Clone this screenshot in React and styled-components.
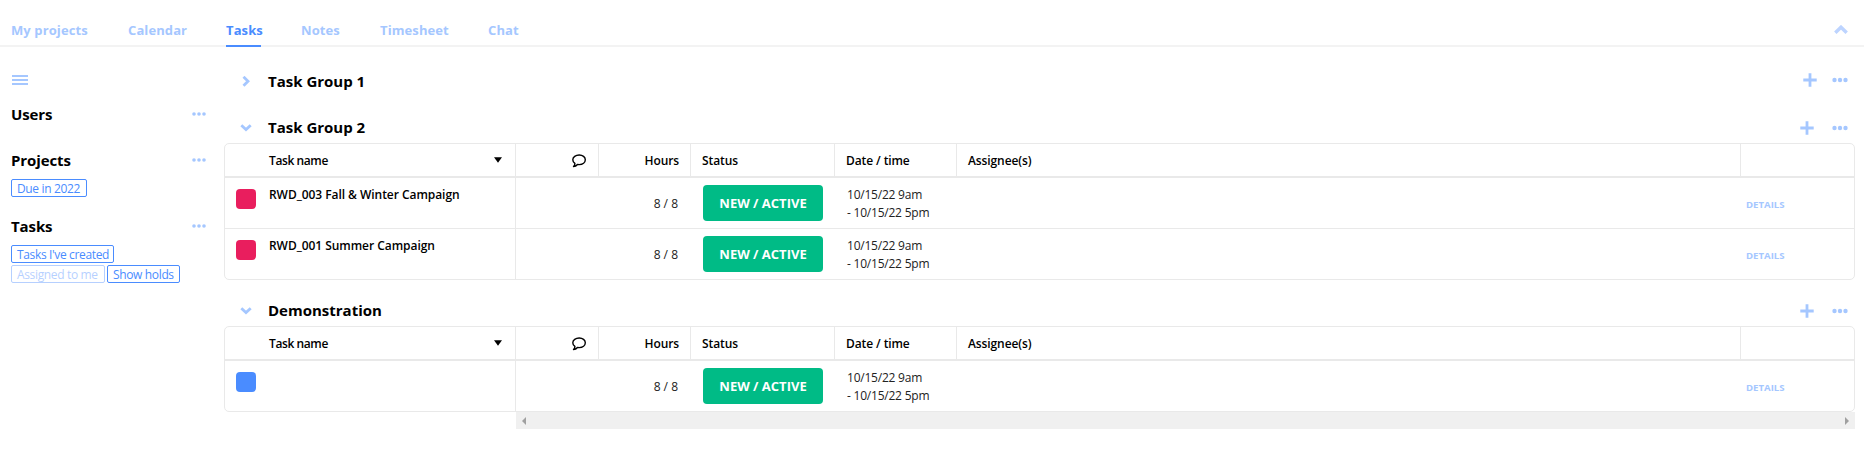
import React from 'react';
import styled, { createGlobalStyle } from 'styled-components';

const blue = '#4a8cff';
const paleBlue = '#a5c7ff';
const line = '#e9e9e9';

const GlobalStyle = createGlobalStyle`
  * { box-sizing: border-box; }
  body {
    margin: 0;
    background: #fff;
    color: #000;
    font-family: 'Open Sans', 'Noto Sans', sans-serif;
    font-size: 12px;
  }
  svg { display: block; flex: none; }
`;

const Page = styled.div`
  min-height: 453px;
`;

const NavBar = styled.nav`
  display: flex;
  align-items: flex-end;
  justify-content: space-between;
  height: 47px;
  padding: 0 16px 0 11px;
  box-shadow: inset 0 -2px #f3f3f3;
`;

const TabList = styled.div`
  display: flex;
  gap: 40px;
`;

const Tab = styled.a`
  width: ${p => p.$width}px;
  padding-bottom: 5px;
  border-bottom: 2px solid ${p => (p.$active ? blue : 'transparent')};
  color: ${p => (p.$active ? blue : paleBlue)};
  font-size: 13px;
  font-weight: 700;
  line-height: 20px;
  letter-spacing: 0.1px;
  white-space: nowrap;
`;

const CollapseButton = styled.div`
  padding-bottom: 13px;
`;

const Body = styled.div`
  display: flex;
`;

const Sidebar = styled.aside`
  flex: none;
  width: 224px;
  padding: 28px 18px 0 11px;
`;

const MenuButton = styled.div`
  display: flex;
  flex-direction: column;
  gap: 2px;
  width: 16px;
  margin-left: 1px;
`;

const MenuLine = styled.span`
  height: 2px;
  background: ${paleBlue};
`;

const FilterSection = styled.section`
  min-height: 27px;
  margin-top: 19px;
`;

const FilterHeader = styled.div`
  display: flex;
  align-items: center;
  justify-content: space-between;
  height: 20px;
`;

const Heading = styled.h2`
  margin: 0;
  font-size: 15px;
  font-weight: 700;
  line-height: 20px;
  letter-spacing: -0.1px;
`;

const GroupTitle = styled(Heading)`
  padding-bottom: 2px;
  letter-spacing: 0;
`;

const ChipList = styled.div`
  display: flex;
  flex-wrap: wrap;
  gap: 2px;
  margin-top: 9px;
`;

const Chip = styled.span`
  width: ${p => p.$width}px;
  height: 18px;
  padding-left: 5px;
  border: 1px solid ${blue};
  border-radius: 2px;
  color: ${blue};
  line-height: 17px;
  letter-spacing: -0.35px;
  white-space: nowrap;
  opacity: ${p => (p.$off ? 0.4 : 1)};
`;

const Main = styled.main`
  display: flex;
  flex-direction: column;
  gap: 16px;
  width: 1631px;
  padding-top: 20px;
`;

const GroupHeader = styled.header`
  display: flex;
  align-items: center;
  height: 30px;
  padding: 0 7px 0 16px;
`;

const Toggle = styled.div`
  display: flex;
  justify-content: center;
  width: 12px;
  margin-right: 16px;
`;

const GroupActions = styled.div`
  display: flex;
  align-items: center;
  gap: ${p => (p.$collapsed ? 15 : 18)}px;
  margin-left: auto;
  padding-bottom: ${p => (p.$collapsed ? 4 : 0)}px;
`;

const Table = styled.div`
  border: 1px solid ${line};
  border-radius: 5px;
`;

const Columns = styled.div`
  display: grid;
  grid-template-columns: 291px 83px 92px 144px 122px 784px 1fr;
`;

const HeaderRow = styled(Columns)`
  height: 34px;
  border-bottom: 2px solid ${line};
`;

const HeaderCell = styled.div`
  display: flex;
  align-items: center;
  justify-content: ${p => p.$justify || 'flex-start'};
  padding: 0 11px;
  border-right: 1px solid ${line};
  font-weight: 600;
  letter-spacing: -0.1px;
  &:last-child { border-right: 0; }
`;

const NameHeaderCell = styled(HeaderCell)`
  justify-content: space-between;
  padding: 0 13px 0 44px;
  letter-spacing: -0.4px;
`;

const IconHeaderCell = styled(HeaderCell)`
  justify-content: flex-end;
  padding: 1px 12px 0 0;
`;

const TaskRow = styled(Columns)`
  height: 50px;
  & + & {
    height: 51px;
    border-top: 1px solid ${line};
  }
`;

const NameCell = styled.div`
  display: flex;
  gap: 13px;
  padding: 8px 0 0 11px;
  border-right: 1px solid ${line};
  font-weight: 600;
  line-height: 18px;
  letter-spacing: -0.05px;
  white-space: nowrap;
`;

const Swatch = styled.span`
  width: 20px;
  height: 20px;
  margin-top: 3px;
  border-radius: 4px;
  background: ${p => p.$color};
`;

const Cell = styled.div`
  display: flex;
  align-items: center;
  justify-content: ${p => p.$justify || 'flex-start'};
  padding: 0 12px;
  color: #222;
  line-height: 18px;
`;

const HoursCell = styled(Cell)`
  justify-content: flex-end;
  padding: 2px 13px 0 0;
`;

const DateCell = styled(Cell)`
  padding-top: 2px;
  letter-spacing: -0.22px;
  white-space: nowrap;
`;

const StatusButton = styled.span`
  width: 120px;
  height: 36px;
  border-radius: 4px;
  background: #00bb86;
  color: #fff;
  font-size: 13px;
  font-weight: 700;
  line-height: 36px;
  text-align: center;
`;

const DetailsLink = styled.a`
  margin-left: -7px;
  padding-top: 4px;
  color: ${paleBlue};
  font-size: 9.6px;
  font-weight: 700;
`;

const ScrollBar = styled.div`
  display: flex;
  align-items: center;
  justify-content: space-between;
  height: 17px;
  margin-left: 292px;
  padding: 0 6px;
  background: #f0f0f0;
`;

const Dots = ({ size = 16 }) => (
  <svg width={size} height="6" viewBox={`0 0 ${size} 6`} fill={paleBlue}>
    {[0, 1, 2].map(i => (
      <circle key={i} cx={size / 2 + (i - 1) * (size === 16 ? 5.5 : 5)} cy="3" r={size === 16 ? 2.2 : 1.8} />
    ))}
  </svg>
);

const Plus = () => (
  <svg width="14" height="14" viewBox="0 0 14 14" stroke={paleBlue} strokeWidth="2.8">
    <path d="M7 0.3v13.4M0.3 7h13.4" />
  </svg>
);

const ChevronDown = () => (
  <svg width="12" height="8" viewBox="0 0 12 8" fill="none" stroke={paleBlue} strokeWidth="2.8">
    <path d="M1.3 1.2 6 5.5l4.7-4.3" />
  </svg>
);

const ChevronRight = () => (
  <svg width="8" height="12" viewBox="0 0 8 12" fill="none" stroke={paleBlue} strokeWidth="2.8">
    <path d="M1.5 0.8 6 5.3 1.5 9.8" />
  </svg>
);

const ChevronUp = () => (
  <svg width="14" height="9" viewBox="0 0 14 9" fill="none" stroke="#bdd4ff" strokeWidth="3.4">
    <path d="M1.3 7.8 7 2.2l5.7 5.6" />
  </svg>
);

const SortArrow = () => (
  <svg width="8" height="9" viewBox="0 0 8 9">
    <path d="M0 1.2h8L4 6.7z" />
  </svg>
);

const CommentIcon = () => (
  <svg width="14" height="14" viewBox="0 0 14 14" fill="none" stroke="#000" strokeWidth="1.4" strokeLinejoin="round">
    <path d="M7.2 1C3.7 1 .8 3.1.8 5.8c0 1.5.8 2.8 2.1 3.6 0 1.3-.6 2.4-1.4 3.2 1.7 0 3-.8 4-2.1.6.1 1.1.1 1.7.1 3.5 0 6.1-2.1 6.1-4.8S10.7 1 7.2 1Z" />
  </svg>
);

const ScrollArrow = ({ left }) => (
  <svg width="4" height="8" viewBox="0 0 4 8" fill="#a0a0a0">
    <path d={left ? 'M4 0v8L0 4z' : 'M0 0v8l4-4z'} />
  </svg>
);

const tabs = [
  ['My projects', 77],
  ['Calendar', 58],
  ['Tasks', 35],
  ['Notes', 39],
  ['Timesheet', 68],
  ['Chat', 31],
];

const filters = [
  { title: 'Users', chips: [] },
  { title: 'Projects', chips: [['Due in 2022', 76]] },
  { title: 'Tasks', chips: [["Tasks I've created", 103], ['Assigned to me', 94, true], ['Show holds', 73]] },
];

const groups = [
  { title: 'Task Group 1' },
  {
    title: 'Task Group 2',
    tasks: [
      { name: 'RWD_003 Fall & Winter Campaign', color: '#e91e5e' },
      { name: 'RWD_001 Summer Campaign', color: '#e91e5e' },
    ],
  },
  { title: 'Demonstration', tasks: [{ name: '', color: blue }] },
];

function TaskTable({ tasks }) {
  return (
    <Table>
      <HeaderRow>
        <NameHeaderCell>Task name<SortArrow /></NameHeaderCell>
        <IconHeaderCell><CommentIcon /></IconHeaderCell>
        <HeaderCell $justify="flex-end">Hours</HeaderCell>
        <HeaderCell>Status</HeaderCell>
        <HeaderCell>Date / time</HeaderCell>
        <HeaderCell>Assignee(s)</HeaderCell>
        <HeaderCell />
      </HeaderRow>
      {tasks.map((task, i) => (
        <TaskRow key={i}>
          <NameCell><Swatch $color={task.color} />{task.name}</NameCell>
          <Cell />
          <HoursCell>8 / 8</HoursCell>
          <Cell><StatusButton>NEW / ACTIVE</StatusButton></Cell>
          <DateCell>10/15/22 9am<br />- 10/15/22 5pm</DateCell>
          <Cell />
          <Cell><DetailsLink>DETAILS</DetailsLink></Cell>
        </TaskRow>
      ))}
    </Table>
  );
}

export default function App() {
  return (
    <Page>
      <GlobalStyle />
      <NavBar>
        <TabList>
          {tabs.map(([label, width]) => (
            <Tab key={label} $width={width} $active={label === 'Tasks'}>{label}</Tab>
          ))}
        </TabList>
        <CollapseButton><ChevronUp /></CollapseButton>
      </NavBar>
      <Body>
        <Sidebar>
          <MenuButton><MenuLine /><MenuLine /><MenuLine /></MenuButton>
          {filters.map(({ title, chips }) => (
            <FilterSection key={title}>
              <FilterHeader><Heading>{title}</Heading><Dots size={14} /></FilterHeader>
              {chips.length > 0 && (
                <ChipList>
                  {chips.map(([label, width, off]) => (
                    <Chip key={label} $width={width} $off={off}>{label}</Chip>
                  ))}
                </ChipList>
              )}
            </FilterSection>
          ))}
        </Sidebar>
        <Main>
          {groups.map(({ title, tasks }) => (
            <section key={title}>
              <GroupHeader>
                <Toggle>{tasks ? <ChevronDown /> : <ChevronRight />}</Toggle>
                <GroupTitle>{title}</GroupTitle>
                <GroupActions $collapsed={!tasks}><Plus /><Dots /></GroupActions>
              </GroupHeader>
              {tasks && <TaskTable tasks={tasks} />}
              {title === 'Demonstration' && <ScrollBar><ScrollArrow left /><ScrollArrow /></ScrollBar>}
            </section>
          ))}
        </Main>
      </Body>
    </Page>
  );
}
